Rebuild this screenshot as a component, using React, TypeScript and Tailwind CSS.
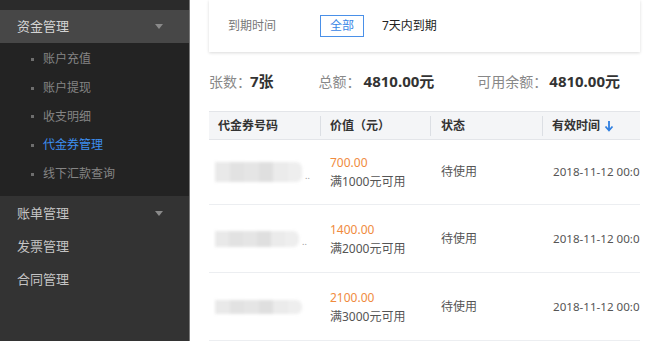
import React from "react";

const F = { fontFamily: '"Noto Sans", "Noto Sans CJK SC", sans-serif' };

function Caret() {
  return (
    <svg width="8" height="5" viewBox="0 0 8 5" className="shrink-0">
      <path d="M0 0 L8 0 L4 5 Z" fill="#8a8a8a" />
    </svg>
  );
}

const subItems = ["账户充值", "账户提现", "收支明细", "代金券管理", "线下汇款查询"];

function Sidebar() {
  return (
    <div className="w-[190px] shrink-0 bg-[#333333] flex flex-col border-r border-[#7a7a7a] min-h-[341px]">
      <div className="h-[10px] bg-[#2b2b2b]" />
      <div className="h-[33px] bg-[#474747] flex items-center justify-between pl-[17px] pr-[26px]">
        <span className="text-[13px] text-[#d4d4d4]">资金管理</span>
        <Caret />
      </div>
      <div className="bg-[#232323] pt-[2px] pb-[8px] flex flex-col">
        {subItems.map((s, i) => (
          <div key={s} className="h-[28.7px] flex items-center pl-[31px] gap-[9px]">
            <span className="w-[3px] h-[3px] bg-[#6e6e6e]" />
            <span className={"text-[12px] " + (i === 3 ? "text-[#3d8ff0]" : "text-[#858585]")}>{s}</span>
          </div>
        ))}
      </div>
      <div className="flex flex-col pt-[1px]">
        <div className="h-[33px] flex items-center justify-between pl-[17px] pr-[26px]">
          <span className="text-[13px] text-[#c4c4c4]">账单管理</span>
          <Caret />
        </div>
        <div className="h-[33px] flex items-center pl-[17px]">
          <span className="text-[13px] text-[#c4c4c4]">发票管理</span>
        </div>
        <div className="h-[32px] flex items-center pl-[17px]">
          <span className="text-[13px] text-[#c4c4c4]">合同管理</span>
        </div>
      </div>
    </div>
  );
}

function Blur({ w, h, variant }: { w: number; h: number; variant: number }) {
  return (
    <div className="flex items-center gap-[3px]">
      <div
        className="flex blur-[1.5px] rounded-r-[6px] overflow-hidden"
        style={{ width: w, height: h }}
      >
        <div className="flex-1 bg-[#e9e9e9]" />
        <div className="flex-1 bg-[#e2e2e2]" />
        <div className="flex-1 bg-[#e5e5e5]" />
        <div className="flex-1 bg-[#dfdfdf]" />
        <div className="flex-1 bg-[#ebebeb]" />
        <div className="flex-1 bg-[#eeeeee]" />
      </div>
      {variant !== 3 && <span className="text-[9px] text-[#999] leading-none mt-[6px]">..</span>}
    </div>
  );
}

const rows = [
  { price: "700.00", cond: "满1000元可用", h: "h-[65px]", bw: 87, bh: 20 },
  { price: "1400.00", cond: "满2000元可用", h: "h-[68px]", bw: 84, bh: 16 },
  { price: "2100.00", cond: "满3000元可用", h: "h-[68px]", bw: 87, bh: 14 },
];

export default function App() {
  return (
    <div className="w-[667px] h-[341px] overflow-hidden flex bg-white" style={F}>
      <Sidebar />
      <div className="flex-1 bg-white pl-[19px] pr-[27px] flex flex-col min-w-0">
        <div className="h-[53px] bg-white shadow-[0_1px_3px_rgba(0,0,0,0.15)] flex items-center pl-[19px]">
          <span className="text-[12px] text-[#777] w-[92px]">到期时间</span>
          <span className="h-[22px] w-[44px] border border-[#4a90e8] text-[#3a86e6] text-[12px] flex items-center justify-center">全部</span>
          <span className="text-[12px] text-[#222] ml-[18px]">7天内到期</span>
        </div>
        <div className="h-[60px] flex items-center text-[14px]">
          <span className="text-[#888]">张数：</span>
          <span className="font-bold text-[15px] text-[#333] ml-[-1px]">7张</span>
          <span className="text-[#888] ml-[45px]">总额：</span>
          <span className="font-bold text-[15px] text-[#333] ml-[3px]">4810.00元</span>
          <span className="text-[#888] ml-[43px]">可用余额：</span>
          <span className="font-bold text-[15px] text-[#333] ml-[2px]">4810.00元</span>
        </div>
        <div className="flex flex-col">
          <div className="h-[29px] bg-[#f4f5f7] border-t border-[#e3e5e9] border-b flex items-center text-[12px] font-bold text-[#333]">
            <div className="w-[112px] pl-[9px] border-r border-[#dcdfe4] h-[20px] flex items-center">代金券号码</div>
            <div className="w-[110px] pl-[9px] border-r border-[#dcdfe4] h-[20px] flex items-center">价值（元）</div>
            <div className="w-[112px] pl-[10px] border-r border-[#dcdfe4] h-[20px] flex items-center">状态</div>
            <div className="flex-1 pl-[9px] h-[20px] flex items-center whitespace-nowrap">
              有效时间
              <svg width="10" height="12" viewBox="0 0 10 12" className="ml-[4px]">
                <path d="M5 1 V10 M1.5 6.5 L5 10.5 L8.5 6.5" stroke="#2f7fe0" strokeWidth="1.8" fill="none" />
              </svg>
            </div>
          </div>
          {rows.map((r, i) => (
            <div key={i} className={r.h + " flex items-center border-b border-[#eceef1] text-[12px]"}>
              <div className="w-[112px] pl-[6px]">
                <Blur w={r.bw} h={r.bh} variant={i + 1} />
              </div>
              <div className="w-[110px] pl-[9px] flex flex-col leading-[19px]">
                <span className="text-[#f08b3e]">{r.price}</span>
                <span className="text-[#555]">{r.cond}</span>
              </div>
              <div className="w-[112px] pl-[10px] text-[#555]">待使用</div>
              <div className="flex-1 pl-[10px] text-[#555] text-[11.6px] whitespace-nowrap">2018-11-12 00:0</div>
            </div>
          ))}
        </div>
      </div>
    </div>
  );
}
